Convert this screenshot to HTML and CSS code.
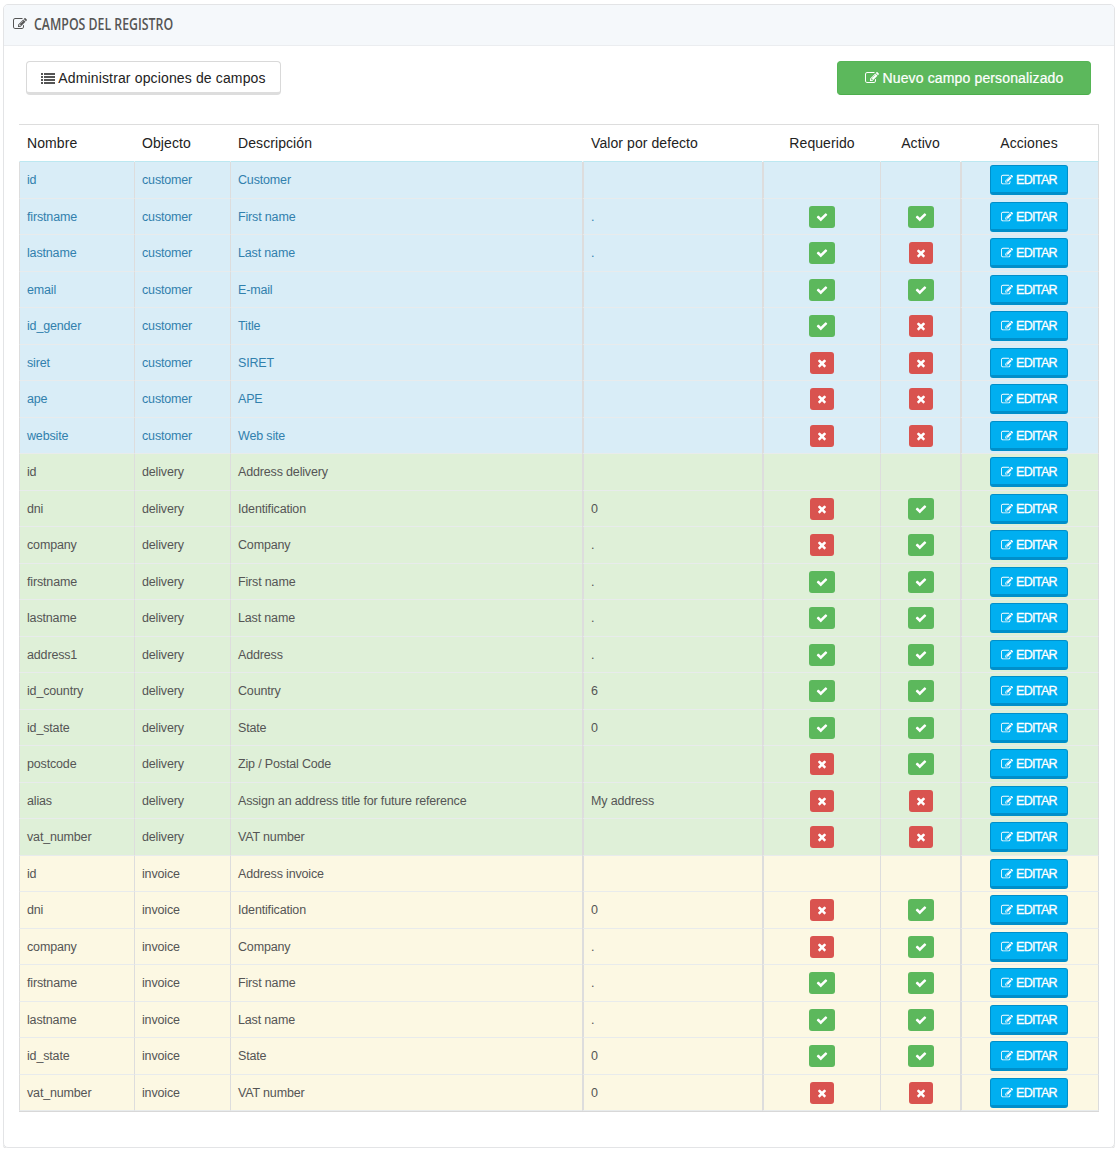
FILE: index.html
```html
<!DOCTYPE html>
<html lang="es">
<head>
<meta charset="utf-8">
<title>Campos del registro</title>
<link rel="stylesheet" href="styles.css">
</head>
<body>
<svg class="sprite" aria-hidden="true">
  <symbol id="edit" viewBox="0 0 1792 1792"><path d="M888 1184l116-116-152-152-116 116v56h96v96h56zm440-720q-16-16-33 1l-350 350q-17 17-1 33t33-1l350-350q17-17 1-33zm80 594v190q0 119-84.5 203.5t-203.5 84.5h-832q-119 0-203.5-84.5t-84.5-203.5v-832q0-119 84.5-203.5t203.5-84.5h832q63 0 117 25 15 7 18 23 3 17-9 29l-49 49q-14 14-32 8-23-6-45-6h-832q-66 0-113 47t-47 113v832q0 66 47 113t113 47h832q66 0 113-47t47-113v-126q0-13 9-22l64-64q15-15 35-7t20 29zm-96-738l288 288-672 672h-288v-288zm444 132l-92 92-288-288 92-92q28-28 68-28t68 28l152 152q28 28 28 68t-28 68z"/></symbol>
  <symbol id="check" viewBox="0 0 1792 1792"><path d="M1671 566q0 40-28 68l-724 724-136 136q-28 28-68 28t-68-28l-136-136-362-362q-28-28-28-68t28-68l136-136q28-28 68-28t68 28l294 295 656-657q28-28 68-28t68 28l136 136q28 28 28 68z"/></symbol>
  <symbol id="times" viewBox="0 0 1792 1792"><path d="M1490 1322q0 40-28 68l-136 136q-28 28-68 28t-68-28l-294-294-294 294q-28 28-68 28t-68-28l-136-136q-28-28-28-68t28-68l294-294-294-294q-28-28-28-68t28-68l136-136q28-28 68-28t68 28l294 294 294-294q28-28 68-28t68 28l136 136q28 28 28 68t-28 68l-294 294 294 294q28 28 28 68z"/></symbol>
  <symbol id="list" viewBox="0 0 14 12"><path d="M0 1h2v2H0zM3 1h11v2H3zM0 4h2v2H0zM3 4h11v2H3zM0 7h2v2H0zM3 7h11v2H3zM0 10h2v2H0zM3 10h11v2H3z"/></symbol>
</svg>
<main class="panel">
  <header class="panel-heading"><svg class="icon"><use href="#edit"/></svg><h1>CAMPOS DEL REGISTRO</h1></header>
  <div class="toolbar">
    <button class="btn btn-default"><svg class="icon icon-list"><use href="#list"/></svg><span>Administrar opciones de campos</span></button>
    <button class="btn btn-success"><svg class="icon"><use href="#edit"/></svg><span>Nuevo campo personalizado</span></button>
  </div>
  <div class="table">
    <div class="row head"><span>Nombre</span><span>Objecto</span><span>Descripción</span><span>Valor por defecto</span><span>Requerido</span><span>Activo</span><span>Acciones</span></div>
    <div class="row info"><span>id</span><span>customer</span><span>Customer</span><span></span><span></span><span></span><span><button class="edit"><svg><use href="#edit"/></svg>EDITAR</button></span></div>
    <div class="row info"><span>firstname</span><span>customer</span><span>First name</span><span>.</span><span><i class="yes"><svg><use href="#check"/></svg></i></span><span><i class="yes"><svg><use href="#check"/></svg></i></span><span><button class="edit"><svg><use href="#edit"/></svg>EDITAR</button></span></div>
    <div class="row info"><span>lastname</span><span>customer</span><span>Last name</span><span>.</span><span><i class="yes"><svg><use href="#check"/></svg></i></span><span><i class="no"><svg><use href="#times"/></svg></i></span><span><button class="edit"><svg><use href="#edit"/></svg>EDITAR</button></span></div>
    <div class="row info"><span>email</span><span>customer</span><span>E-mail</span><span></span><span><i class="yes"><svg><use href="#check"/></svg></i></span><span><i class="yes"><svg><use href="#check"/></svg></i></span><span><button class="edit"><svg><use href="#edit"/></svg>EDITAR</button></span></div>
    <div class="row info"><span>id_gender</span><span>customer</span><span>Title</span><span></span><span><i class="yes"><svg><use href="#check"/></svg></i></span><span><i class="no"><svg><use href="#times"/></svg></i></span><span><button class="edit"><svg><use href="#edit"/></svg>EDITAR</button></span></div>
    <div class="row info"><span>siret</span><span>customer</span><span>SIRET</span><span></span><span><i class="no"><svg><use href="#times"/></svg></i></span><span><i class="no"><svg><use href="#times"/></svg></i></span><span><button class="edit"><svg><use href="#edit"/></svg>EDITAR</button></span></div>
    <div class="row info"><span>ape</span><span>customer</span><span>APE</span><span></span><span><i class="no"><svg><use href="#times"/></svg></i></span><span><i class="no"><svg><use href="#times"/></svg></i></span><span><button class="edit"><svg><use href="#edit"/></svg>EDITAR</button></span></div>
    <div class="row info"><span>website</span><span>customer</span><span>Web site</span><span></span><span><i class="no"><svg><use href="#times"/></svg></i></span><span><i class="no"><svg><use href="#times"/></svg></i></span><span><button class="edit"><svg><use href="#edit"/></svg>EDITAR</button></span></div>
    <div class="row success"><span>id</span><span>delivery</span><span>Address delivery</span><span></span><span></span><span></span><span><button class="edit"><svg><use href="#edit"/></svg>EDITAR</button></span></div>
    <div class="row success"><span>dni</span><span>delivery</span><span>Identification</span><span>0</span><span><i class="no"><svg><use href="#times"/></svg></i></span><span><i class="yes"><svg><use href="#check"/></svg></i></span><span><button class="edit"><svg><use href="#edit"/></svg>EDITAR</button></span></div>
    <div class="row success"><span>company</span><span>delivery</span><span>Company</span><span>.</span><span><i class="no"><svg><use href="#times"/></svg></i></span><span><i class="yes"><svg><use href="#check"/></svg></i></span><span><button class="edit"><svg><use href="#edit"/></svg>EDITAR</button></span></div>
    <div class="row success"><span>firstname</span><span>delivery</span><span>First name</span><span>.</span><span><i class="yes"><svg><use href="#check"/></svg></i></span><span><i class="yes"><svg><use href="#check"/></svg></i></span><span><button class="edit"><svg><use href="#edit"/></svg>EDITAR</button></span></div>
    <div class="row success"><span>lastname</span><span>delivery</span><span>Last name</span><span>.</span><span><i class="yes"><svg><use href="#check"/></svg></i></span><span><i class="yes"><svg><use href="#check"/></svg></i></span><span><button class="edit"><svg><use href="#edit"/></svg>EDITAR</button></span></div>
    <div class="row success"><span>address1</span><span>delivery</span><span>Address</span><span>.</span><span><i class="yes"><svg><use href="#check"/></svg></i></span><span><i class="yes"><svg><use href="#check"/></svg></i></span><span><button class="edit"><svg><use href="#edit"/></svg>EDITAR</button></span></div>
    <div class="row success"><span>id_country</span><span>delivery</span><span>Country</span><span>6</span><span><i class="yes"><svg><use href="#check"/></svg></i></span><span><i class="yes"><svg><use href="#check"/></svg></i></span><span><button class="edit"><svg><use href="#edit"/></svg>EDITAR</button></span></div>
    <div class="row success"><span>id_state</span><span>delivery</span><span>State</span><span>0</span><span><i class="yes"><svg><use href="#check"/></svg></i></span><span><i class="yes"><svg><use href="#check"/></svg></i></span><span><button class="edit"><svg><use href="#edit"/></svg>EDITAR</button></span></div>
    <div class="row success"><span>postcode</span><span>delivery</span><span>Zip / Postal Code</span><span></span><span><i class="no"><svg><use href="#times"/></svg></i></span><span><i class="yes"><svg><use href="#check"/></svg></i></span><span><button class="edit"><svg><use href="#edit"/></svg>EDITAR</button></span></div>
    <div class="row success"><span>alias</span><span>delivery</span><span>Assign an address title for future reference</span><span>My address</span><span><i class="no"><svg><use href="#times"/></svg></i></span><span><i class="no"><svg><use href="#times"/></svg></i></span><span><button class="edit"><svg><use href="#edit"/></svg>EDITAR</button></span></div>
    <div class="row success"><span>vat_number</span><span>delivery</span><span>VAT number</span><span></span><span><i class="no"><svg><use href="#times"/></svg></i></span><span><i class="no"><svg><use href="#times"/></svg></i></span><span><button class="edit"><svg><use href="#edit"/></svg>EDITAR</button></span></div>
    <div class="row warning"><span>id</span><span>invoice</span><span>Address invoice</span><span></span><span></span><span></span><span><button class="edit"><svg><use href="#edit"/></svg>EDITAR</button></span></div>
    <div class="row warning"><span>dni</span><span>invoice</span><span>Identification</span><span>0</span><span><i class="no"><svg><use href="#times"/></svg></i></span><span><i class="yes"><svg><use href="#check"/></svg></i></span><span><button class="edit"><svg><use href="#edit"/></svg>EDITAR</button></span></div>
    <div class="row warning"><span>company</span><span>invoice</span><span>Company</span><span>.</span><span><i class="no"><svg><use href="#times"/></svg></i></span><span><i class="yes"><svg><use href="#check"/></svg></i></span><span><button class="edit"><svg><use href="#edit"/></svg>EDITAR</button></span></div>
    <div class="row warning"><span>firstname</span><span>invoice</span><span>First name</span><span>.</span><span><i class="yes"><svg><use href="#check"/></svg></i></span><span><i class="yes"><svg><use href="#check"/></svg></i></span><span><button class="edit"><svg><use href="#edit"/></svg>EDITAR</button></span></div>
    <div class="row warning"><span>lastname</span><span>invoice</span><span>Last name</span><span>.</span><span><i class="yes"><svg><use href="#check"/></svg></i></span><span><i class="yes"><svg><use href="#check"/></svg></i></span><span><button class="edit"><svg><use href="#edit"/></svg>EDITAR</button></span></div>
    <div class="row warning"><span>id_state</span><span>invoice</span><span>State</span><span>0</span><span><i class="yes"><svg><use href="#check"/></svg></i></span><span><i class="yes"><svg><use href="#check"/></svg></i></span><span><button class="edit"><svg><use href="#edit"/></svg>EDITAR</button></span></div>
    <div class="row warning"><span>vat_number</span><span>invoice</span><span>VAT number</span><span>0</span><span><i class="no"><svg><use href="#times"/></svg></i></span><span><i class="no"><svg><use href="#times"/></svg></i></span><span><button class="edit"><svg><use href="#edit"/></svg>EDITAR</button></span></div>
  </div>
</main>
</body>
</html>
```
FILE: styles.css
```css
* { box-sizing: border-box; }
body {
  margin: 0;
  padding: 4px 4px 0 3px;
  background: #fff;
  font-family: "Liberation Sans", Arial, sans-serif;
}
svg { fill: currentColor; flex: none; }
.sprite { display: none; }
button { font-family: inherit; margin: 0; }
.panel {
  height: 1144px;
  border: 1px solid #e3e4e6;
  border-radius: 5px;
  box-shadow: 0 2px 0 #e4e4e4;
}
.panel-heading {
  display: flex;
  align-items: center;
  height: 41px;
  padding: 0 0 2px 9px;
  gap: 7px;
  background: #f5f8fb;
  border-bottom: 1px solid #ebedf0;
  border-radius: 4px 4px 0 0;
  color: #555;
}
.icon { width: 14px; height: 14px; }
h1 {
  margin: 0;
  font: 600 15.5px/20px "Open Sans", sans-serif;
  white-space: nowrap;
  transform: scaleX(.795);
  transform-origin: left center;
}
.toolbar {
  display: flex;
  justify-content: space-between;
  padding: 15px 23px 29px 22px;
}
.btn {
  display: flex;
  align-items: center;
  justify-content: center;
  gap: 3px;
  width: 255px;
  height: 34px;
  padding: 0;
  border-radius: 4px;
  font-size: 14px;
  letter-spacing: .14px;
  white-space: nowrap;
}
.btn-default {
  padding-top: 2px;
  background: #fff;
  border: 1px solid #d9d9d9;
  border-bottom: 3px solid #ddd;
  color: #222;
}
.icon-list { width: 14px; height: 12px; color: #555; }
.btn-success {
  width: 254px;
  gap: 4px;
  background: #5cb85c;
  border: 1px solid #55b555;
  border-bottom-color: #4cae4c;
  color: #fff;
  -webkit-text-stroke: .2px #fff;
}
.table {
  width: 1080px;
  margin-left: 15px;
  border-top: 1px solid #ddd;
  border-bottom: 1px solid #d8d8d8;
}
.row {
  display: grid;
  grid-template-columns: 115px 96px 352px 180px 118px 80px 139px;
  height: 36.5px;
  font-size: 12.5px;
  letter-spacing: -.16px;
  color: #555;
}
.row > span {
  display: flex;
  align-items: center;
  padding: .8px 0 0 7px;
  border-left: 1px solid #ddd;
  border-bottom: 1px solid #e8ebec;
  white-space: nowrap;
}
.row > span:nth-child(4) { border-left-width: 2px; }
.row > span:nth-child(n+5) { justify-content: center; padding-left: 0; }
.row > span:nth-child(5), .row > span:nth-child(7) { border-left-width: 2px; }
.row > span:nth-child(7) { border-right: 1px solid #dcdcdc; padding-right: 2px; }
.row.head {
  height: 37px;
  font-size: 14px;
  letter-spacing: .08px;
  color: #222;
}
.row.head > span { padding-top: 0; border-left-color: transparent; border-bottom-color: #bce8f1; }
.info { background: #d9edf7; }
.info > span { color: #3180ad; }
.success { background: #dff0d8; }
.warning { background: #fcf8e3; }
.yes, .no {
  display: flex;
  align-items: center;
  justify-content: center;
  width: 26px;
  height: 22px;
  border-radius: 3px;
  background: #5cb85c;
  color: #fff;
}
.no { width: 24px; background: #d9534f; }
.yes svg, .no svg { width: 12px; height: 12px; }
.edit {
  display: flex;
  align-items: center;
  justify-content: center;
  gap: 3px;
  width: 78px;
  height: 30px;
  padding: 2px 0 0;
  border: 1px solid #008fca;
  border-bottom-width: 3px;
  border-radius: 3px;
  background: #00aff0;
  color: #fff;
  font-size: 12.5px;
  letter-spacing: -.65px;
  -webkit-text-stroke: .3px #fff;
}
.edit svg { width: 12px; height: 12px; }
```
